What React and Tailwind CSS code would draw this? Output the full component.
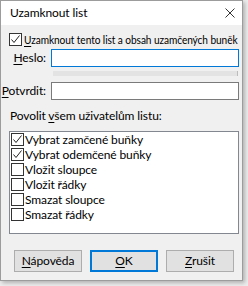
import React from "react";

const font = { fontFamily: "Lato, 'Liberation Sans', sans-serif" };

function Check({ checked }) {
  return (
    <div className="w-[13px] h-[13px] border border-[#333333] bg-white flex items-center justify-center shrink-0">
      {checked && (
        <svg width="11" height="11" viewBox="0 0 11 11">
          <polyline points="1.5,5.5 4,8.5 9.5,1.5" fill="none" stroke="#222" strokeWidth="1" />
        </svg>
      )}
    </div>
  );
}

function U({ children }) {
  return <span className="underline underline-offset-[2px] decoration-[1px]">{children}</span>;
}

const items = [
  ["Vybrat zamčené buňky", true],
  ["Vybrat odemčené buňky", true],
  ["Vložit sloupce", false],
  ["Vložit řádky", false],
  ["Smazat sloupce", false],
  ["Smazat řádky", false],
];

export default function App() {
  return (
    <div className="w-[248px] h-[286px] bg-[#ededed] overflow-hidden whitespace-nowrap" style={font}>
      <div className="w-[243px] h-[281px] flex flex-col border border-[#9c9c9c] shadow-[2px_2px_4px_rgba(0,0,0,0.25)] text-[12px] text-black tracking-[-0.1px]">
        <div className="h-[24px] bg-white flex items-center justify-between pl-[9px] pr-[5px] shrink-0">
          <span>Uzamknout list</span>
          <svg width="12" height="12" viewBox="0 0 12 12" className="mr-[1px]">
            <path d="M1.5 1.5 L10.5 10.5 M10.5 1.5 L1.5 10.5" stroke="#333" strokeWidth="1" />
          </svg>
        </div>
        <div className="flex-1 bg-[#f0f0f0] flex flex-col">
          <div className="mt-[8px] ml-[8px] h-[13px] flex items-center gap-[2px]">
            <Check checked />
            <span className="inline-block origin-left scale-x-[0.845] tracking-[-0.1px] leading-[13px]"><U>U</U>zamknout tento list a obsah uzamčených buněk</span>
          </div>
          <div className="mt-[3px] h-[18px] flex items-center">
            <span className="w-[45px] text-right leading-[14px]"><U>H</U>eslo:</span>
            <div className="ml-[5px] w-[188px] h-[18px] bg-white border border-[#0078d7]" />
          </div>
          <div className="mt-[4px] ml-[52px] w-[185px] h-[5px] bg-[#e3e3e3] border-r border-[#bcbcbc]" />
          <div className="mt-[6px] h-[18px] flex items-center">
            <span className="w-[45px] text-right leading-[14px]"><U>P</U>otvrdit:</span>
            <div className="ml-[5px] w-[188px] h-[18px] bg-white border border-[#7a7a7a]" />
          </div>
          <div className="mt-[9px] ml-[9px] h-[14px] leading-[14px]">
            Povolit <U>v</U>šem uživatelům listu:
          </div>
          <div className="mt-[8px] ml-[8px] w-[230px] h-[103px] bg-white border border-[#828790] flex flex-col">
            {items.map(([label, c]) => (
              <div key={label} className="h-[15px] flex items-center gap-[1px] pl-[1px]">
                <Check checked={c} />
                <span className="leading-[13px]">{label}</span>
              </div>
            ))}
          </div>
          <div className="mt-[16px] ml-[13px] flex gap-[8px]">
            <button className="w-[68px] h-[22px] bg-[#e1e1e1] border border-[#adadad] text-[12px]"><U>N</U>ápověda</button>
            <button className="w-[68px] h-[22px] bg-[#e1e1e1] border-2 border-[#0078d7] text-[12px]"><U>O</U>K</button>
            <button className="w-[68px] h-[22px] bg-[#e1e1e1] border border-[#adadad] text-[12px]"><U>Z</U>rušit</button>
          </div>
        </div>
      </div>
    </div>
  );
}
